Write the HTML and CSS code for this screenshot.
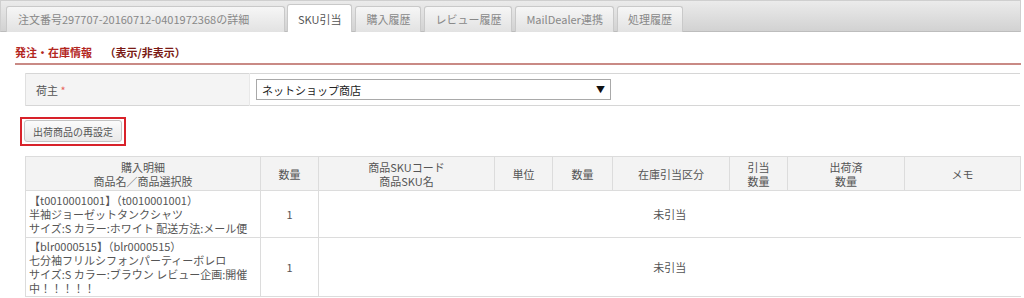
FILE: index.html
```html
<!DOCTYPE html>
<html lang="ja">

<head>
    <meta charset="UTF-8">
    <title>SKU引当</title>
    <link rel="stylesheet" href="styles.css">
</head>

<body>
    <div class="tabbar">
        <div class="tab first">注文番号297707-20160712-0401972368の詳細</div>
        <div class="tab active">SKU引当</div>
        <div class="tab">購入履歴</div>
        <div class="tab">レビュー履歴</div>
        <div class="tab">MailDealer連携</div>
        <div class="tab">処理履歴</div>
    </div>

    <div class="section">
        <h2 class="sectitle">発注・在庫情報 <span class="toggle">（表示/非表示）</span></h2>

        <table class="formtbl">
            <tr>
                <th>荷主 <span class="req">*</span></th>
                <td>
                    <div class="select">
                        <span>ネットショップ商店</span>
                        <span class="arrow">▼</span>
                    </div>
                </td>
            </tr>
        </table>

        <div class="btnwrap">
            <div class="hilite"><button class="btn">出荷商品の再設定</button></div>
        </div>

        <table class="items">
            <colgroup>
                <col style="width:235px">
                <col style="width:58px">
                <col style="width:176px">
                <col style="width:58px">
                <col style="width:60px">
                <col style="width:117px">
                <col style="width:58px">
                <col style="width:117px">
                <col style="width:116px">
            </colgroup>
            <tr class="head">
                <th>購入明細<br>商品名／商品選択肢</th>
                <th>数量</th>
                <th>商品SKUコード<br>商品SKU名</th>
                <th>単位</th>
                <th>数量</th>
                <th>在庫引当区分</th>
                <th>引当<br>数量</th>
                <th>出荷済<br>数量</th>
                <th>メモ</th>
            </tr>
            <tr class="r1">
                <td class="desc">【t0010001001】（t0010001001）<br>半袖ジョーゼットタンクシャツ<br>サイズ:S カラー:ホワイト 配送方法:メール便</td>
                <td class="num">1</td>
                <td class="rest" colspan="7">未引当</td>
            </tr>
            <tr class="r2">
                <td class="desc">【blr0000515】（blr0000515）<br>七分袖フリルシフォンパーティーボレロ<br>サイズ:S カラー:ブラウン レビュー企画:開催中！！！！！</td>
                <td class="num">1</td>
                <td class="rest" colspan="7">未引当</td>
            </tr>
        </table>
    </div>
</body>

</html>
```

FILE: styles.css
```css
* {
    box-sizing: border-box;
}

body {
    margin: 0;
    width: 1021px;
    font-family: "Noto Sans CJK JP", "DejaVu Sans", sans-serif;
    font-size: 11px;
    color: #555;
    background: #fff;
}

/* tabs */
.tabbar {
    display: flex;
    align-items: flex-end;
    gap: 3px;
    height: 32px;
    padding-left: 5px;
    background: linear-gradient(#ebebeb, #d2d2d2);
    border: 1px solid #cfcfcf;
    border-bottom-color: #bdbdbd;
}

.tab {
    height: 26px;
    line-height: 25px;
    padding: 0 10px;
    margin-bottom: -1px;
    color: #888;
    font-size: 11px;
    background: linear-gradient(#f6f6f6, #e2e2e2);
    border: 1px solid #c9c9c9;
    border-bottom: none;
    border-radius: 3px 3px 0 0;
}

.tab.first {
    width: 279px;
    padding-left: 11px;
}

.tab.active {
    height: 28px;
    line-height: 28px;
    background: #fff;
    color: #555;
    padding: 0 10px;
    margin-left: -1px;
}

/* section */
.section {
    padding: 10px 0 0 15px;
}

.sectitle {
    margin: 0;
    padding: 2px 0 3px 0;
    font-size: 11px;
    font-weight: bold;
    color: #b3261e;
    border-bottom: 2px solid #c98a85;
}

.toggle {
    margin-left: 10px;
    color: #7a1a14;
}

.formtbl {
    width: 995px;
    margin: 8px 0 0 10px;
    border-collapse: collapse;
    border-top: 1px solid #d6d6d6;
    border-bottom: 1px solid #d6d6d6;
}

.formtbl th {
    width: 224px;
    height: 32px;
    padding-left: 10px;
    text-align: left;
    font-weight: normal;
    color: #555;
    background: #f4f4f4;
    border-left: 1px solid #e0e0e0;
    border-right: 1px solid #e8e8e8;
}

.formtbl td {
    padding-left: 6px;
}

.req {
    color: #e8665a;
}

.select {
    display: flex;
    justify-content: space-between;
    align-items: center;
    width: 355px;
    height: 21px;
    padding: 0 5px;
    border: 1px solid #a9a9a9;
    color: #222;
}

.arrow {
    font-size: 9px;
    color: #111;
}

.btnwrap {
    padding: 11px 0 0 5px;
    height: 50px;
}

.hilite {
    display: inline-block;
    padding: 1px 2px 2px;
    border: 2px solid #d8222a;
}

.btn {
    font-family: inherit;
    font-size: 10px;
    color: #555;
    height: 22px;
    padding: 0 8px;
    background: linear-gradient(#fbfbfb, #e9e9e9);
    border: 1px solid #c4c4c4;
    border-radius: 3px;
}

.items {
    margin: 0 0 0 10px;
    width: 995px;
    border-collapse: collapse;
    table-layout: fixed;
}

.items th,
.items td {
    border: 1px solid #dcdcdc;
    font-weight: normal;
    color: #555;
}

.items .head th {
    height: 34px;
    padding: 0;
    background: #f3f3f3;
    line-height: 14px;
    text-align: center;
}

.items td.desc {
    padding: 1px 3px;
    line-height: 14px;
    color: #555;
}

.r1 td {
    height: 47px;
}

.r2 td {
    height: 58px;
}

.items td.num {
    text-align: center;
}

.items td.rest {
    text-align: center;
    border-left: none;
    border-right: none;
}
```
